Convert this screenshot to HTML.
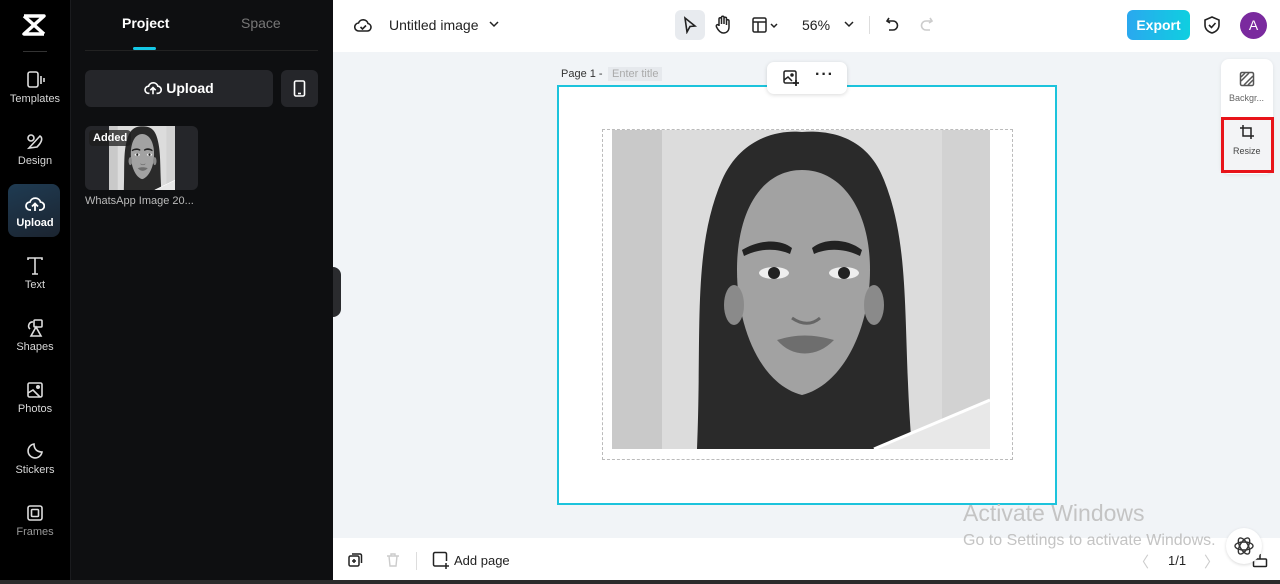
<!DOCTYPE html>
<html><head><meta charset="utf-8"><style>
*{box-sizing:border-box;margin:0;padding:0}
body{width:1280px;height:584px;overflow:hidden;font-family:"Liberation Sans",sans-serif;background:#f1f4f7;position:relative}
.abs{position:absolute}
.rail{left:0;top:0;width:70px;height:580px;background:#000}
.panel{left:70px;top:0;width:263px;height:580px;background:#0e0f11;border-left:1px solid #1a1b1e}
.ri{position:absolute;left:0;width:70px;text-align:center;color:#d8d8d8;font-size:11px}
.ri svg{display:block;margin:0 auto 3px}
.top{left:333px;top:0;width:947px;height:52px;background:#fff}
.bot{left:333px;top:538px;width:947px;height:42px;background:#fff}
.tb{color:#222;font-size:14px}
</style></head><body>
<svg width="0" height="0" style="position:absolute"><defs>
<symbol id="por" viewBox="0 0 378 319" preserveAspectRatio="none">
<rect width="378" height="319" fill="#c9c9c9"/>
<rect x="50" y="0" width="280" height="319" fill="#dcdcdc"/>
<rect x="330" y="0" width="48" height="319" fill="#d2d2d2"/>
<path d="M85 319 C90 200 80 120 110 50 C130 5 170 0 190 2 C215 0 255 5 272 50 C300 120 290 200 300 319 Z" fill="#2a2a2a"/>
<path d="M190 40 C150 40 125 80 125 140 C125 200 150 255 190 265 C230 255 258 200 258 140 C258 80 230 40 190 40 Z" fill="#a2a2a2"/>
<ellipse cx="122" cy="175" rx="10" ry="20" fill="#8a8a8a"/>
<ellipse cx="262" cy="175" rx="10" ry="20" fill="#8a8a8a"/>
<path d="M130 120 C150 108 170 110 180 118 L178 124 C165 118 148 118 132 126 Z" fill="#222"/>
<path d="M200 118 C212 108 235 108 250 120 L248 126 C232 118 215 118 202 124 Z" fill="#222"/>
<ellipse cx="162" cy="143" rx="15" ry="6" fill="#eee"/><circle cx="162" cy="143" r="6" fill="#222"/>
<ellipse cx="232" cy="143" rx="15" ry="6" fill="#eee"/><circle cx="232" cy="143" r="6" fill="#222"/>
<path d="M180 188 C190 195 200 195 208 188" stroke="#666" stroke-width="3" fill="none"/>
<path d="M165 210 C185 204 200 204 222 210 C205 228 180 228 165 210 Z" fill="#6e6e6e"/>
<path d="M262 319 L378 270 L378 319 Z" fill="#e8e8e8"/>
<path d="M262 319 L378 270" stroke="#fff" stroke-width="3"/>
</symbol></defs></svg>

<div class="abs rail"></div>
<div class="abs panel"></div>
<!-- logo -->
<svg class="abs" style="left:21px;top:13px" width="26" height="24" viewBox="0 0 26 24"><path d="M3 3 L23 3 L3 21 L23 21" stroke="#fff" stroke-width="3.5" fill="none" stroke-linejoin="round"/><path d="M3 3 L23 21" stroke="#fff" stroke-width="3.5"/></svg>
<div class="abs" style="left:23px;top:51px;width:24px;height:1px;background:#333"></div>
<div class="ri" style="top:70px"><svg width="20" height="20" viewBox="0 0 20 20" fill="none" stroke="#ddd" stroke-width="1.6"><rect x="3" y="2" width="10" height="15" rx="2"/><path d="M16 6v8M19 8v4"/></svg>Templates</div>
<div class="ri" style="top:132px"><svg width="20" height="20" viewBox="0 0 20 20" fill="none" stroke="#ddd" stroke-width="1.6"><circle cx="6" cy="6" r="3"/><path d="M4 16 L15 4 C18 6 17 10 12 15 Z"/></svg>Design</div>
<div class="abs" style="left:8px;top:184px;width:52px;height:53px;border-radius:8px;background:linear-gradient(160deg,#1f3b52,#1b2430)"></div>
<div class="ri" style="top:194px;color:#fff;font-weight:bold"><svg width="20" height="20" viewBox="0 0 20 20" fill="none" stroke="#fff" stroke-width="1.8"><path d="M6 16 H5 A4 4 0 0 1 5 8 A5.5 5.5 0 0 1 15.5 8 A4 4 0 0 1 15 16 H14"/><path d="M10 17 V10 M7 12.5 L10 9.5 L13 12.5"/></svg>Upload</div>
<div class="ri" style="top:256px"><svg width="20" height="20" viewBox="0 0 20 20" fill="none" stroke="#ddd" stroke-width="1.6"><path d="M3 4 V2 H17 V4 M10 2 V18 M7 18 H13"/></svg>Text</div>
<div class="ri" style="top:318px"><svg width="20" height="20" viewBox="0 0 20 20" fill="none" stroke="#ddd" stroke-width="1.6"><path d="M8 4 A4 4 0 0 0 5 11"/><rect x="9" y="2" width="8" height="7" rx="1"/><path d="M11 9 L6 18 H16 Z"/></svg>Shapes</div>
<div class="ri" style="top:380px"><svg width="20" height="20" viewBox="0 0 20 20" fill="none" stroke="#ddd" stroke-width="1.6"><rect x="3" y="3" width="14" height="14" rx="1.5"/><path d="M3 13 L8 10 L15 17"/><circle cx="13" cy="7" r="1.2" fill="#ddd"/></svg>Photos</div>
<div class="ri" style="top:441px"><svg width="20" height="20" viewBox="0 0 20 20" fill="none" stroke="#ddd" stroke-width="1.6"><path d="M17 11 A7 7 0 1 1 9 3 C9 8 12 11 17 11 Z"/></svg>Stickers</div>
<div class="ri" style="top:503px;color:#999"><svg width="20" height="20" viewBox="0 0 20 20" fill="none" stroke="#ddd" stroke-width="1.6"><rect x="3" y="3" width="14" height="14" rx="2"/><rect x="6.5" y="6.5" width="7" height="7" rx="1"/></svg>Frames</div>

<!-- panel content -->
<div class="abs" style="left:122px;top:15px;color:#fff;font-weight:bold;font-size:14px">Project</div>
<div class="abs" style="left:241px;top:15px;color:#777;font-size:14px">Space</div>
<div class="abs" style="left:133px;top:47px;width:23px;height:3px;background:#14c8e6;border-radius:2px"></div>
<div class="abs" style="left:85px;top:50px;width:233px;height:1px;background:#222"></div>
<div class="abs" style="left:85px;top:70px;width:188px;height:37px;background:#25262a;border-radius:6px;color:#fff;font-weight:bold;font-size:14px;line-height:37px;text-align:center"><svg width="18" height="16" viewBox="0 0 20 18" style="vertical-align:-3px;margin-right:4px" fill="none" stroke="#fff" stroke-width="1.8"><path d="M6 15 H5 A4 4 0 0 1 5 7 A5.5 5.5 0 0 1 15.5 7 A4 4 0 0 1 15 15 H14"/><path d="M10 16 V9 M7 11.5 L10 8.5 L13 11.5"/></svg>Upload</div>
<div class="abs" style="left:281px;top:70px;width:37px;height:37px;background:#25262a;border-radius:6px"><svg width="37" height="37" viewBox="0 0 37 37" fill="none" stroke="#fff" stroke-width="1.6"><rect x="13.5" y="11" width="10" height="15" rx="1.5"/><path d="M17 23.5 H20"/></svg></div>
<div class="abs" style="left:85px;top:126px;width:113px;height:64px;background:#25262a;border-radius:6px;overflow:hidden"><svg class="abs" style="left:24px;top:0" width="66" height="64"><use href="#por" width="66" height="64"/></svg><div class="abs" style="left:4px;top:4px;background:rgba(30,30,30,.75);color:#fff;font-weight:bold;font-size:11px;padding:2px 4px;border-radius:4px">Added</div></div>
<div class="abs" style="left:85px;top:195px;color:#bbb;font-size:11px">WhatsApp Image 20...</div>
<div class="abs" style="left:333px;top:267px;width:8px;height:50px;background:#2a2b2e;border-radius:0 8px 8px 0"></div>

<!-- top bar -->
<div class="abs top"></div>
<svg class="abs" style="left:354px;top:16px" width="18" height="18" viewBox="0 0 18 18" fill="none" stroke="#222" stroke-width="1.6"><path d="M5 15 A4 4 0 0 1 4.5 7 A5 5 0 0 1 14 7.5 A3.8 3.8 0 0 1 13.5 15 Z"/><path d="M6.5 11 L8.5 13 L12 9.5"/></svg>
<div class="abs tb" style="left:389px;top:17px">Untitled image</div>
<svg class="abs" style="left:489px;top:20px" width="10" height="8" viewBox="0 0 10 8" fill="none" stroke="#222" stroke-width="1.5"><path d="M1 2 L5 6 L9 2"/></svg>
<div class="abs" style="left:675px;top:10px;width:30px;height:30px;background:#e8ebef;border-radius:6px"></div>
<svg class="abs" style="left:682px;top:16px" width="16" height="18" viewBox="0 0 16 18" fill="none" stroke="#222" stroke-width="1.6"><path d="M3 2 L13 10 L8 10.5 L5 16 Z"/></svg>
<svg class="abs" style="left:714px;top:15px" width="18" height="20" viewBox="0 0 18 20" fill="none" stroke="#222" stroke-width="1.5"><path d="M5 11 V4 A1.2 1.2 0 0 1 7.5 4 V9 V2.5 A1.2 1.2 0 0 1 10 2.5 V9 V3.5 A1.2 1.2 0 0 1 12.5 3.5 V10 V6 A1.2 1.2 0 0 1 15 6 V12 C15 16 12.5 18 9.5 18 C6 18 4 15 2.5 12 L2.3 11 A1.3 1.3 0 0 1 5 11"/></svg>
<svg class="abs" style="left:751px;top:17px" width="32" height="16" viewBox="0 0 32 16" fill="none" stroke="#222" stroke-width="1.5"><rect x="2" y="1" width="13" height="14" rx="1.5"/><path d="M2 5 H15 M7 5 V15"/><path d="M20 7 L23 10 L26 7"/></svg>
<div class="abs tb" style="left:802px;top:17px">56%</div>
<svg class="abs" style="left:844px;top:20px" width="10" height="8" viewBox="0 0 10 8" fill="none" stroke="#222" stroke-width="1.5"><path d="M1 2 L5 6 L9 2"/></svg>
<div class="abs" style="left:869px;top:16px;width:1px;height:18px;background:#ddd"></div>
<svg class="abs" style="left:885px;top:16px" width="16" height="18" viewBox="0 0 16 18" fill="none" stroke="#222" stroke-width="1.6"><path d="M4 2 L2 5 L5 7"/><path d="M2.5 5 H8 A4.5 4.5 0 0 1 8 14 H4"/></svg>
<svg class="abs" style="left:918px;top:16px" width="16" height="18" viewBox="0 0 16 18" fill="none" stroke="#ccc" stroke-width="1.6"><path d="M12 2 L14 5 L11 7"/><path d="M13.5 5 H8 A4.5 4.5 0 0 0 8 14 H12"/></svg>
<div class="abs" style="left:1127px;top:10px;width:63px;height:30px;border-radius:6px;background:linear-gradient(90deg,#2aa8ef,#0fcfe0);color:#fff;font-weight:bold;font-size:14px;line-height:30px;text-align:center">Export</div>
<svg class="abs" style="left:1203px;top:15px" width="18" height="20" viewBox="0 0 18 20" fill="none" stroke="#222" stroke-width="1.6"><path d="M9 2 L16 5 V10 C16 14 13 17 9 18 C5 17 2 14 2 10 V5 Z"/><path d="M6 10 L8.5 12.5 L12.5 8"/></svg>
<div class="abs" style="left:1240px;top:12px;width:27px;height:27px;border-radius:50%;background:#7a2a9e;color:#fff;font-size:14px;line-height:27px;text-align:center">A</div>

<!-- canvas -->
<div class="abs" style="left:561px;top:68px;font-size:11px;color:#333">Page 1 -</div>
<div class="abs" style="left:608px;top:67px;font-size:11px;color:#aaa;background:#e6e9ed;padding:1px 4px">Enter title</div>
<div class="abs" style="left:557px;top:85px;width:500px;height:420px;background:#fff;border:2px solid #1cc3dc"></div>
<div class="abs" style="left:767px;top:62px;width:80px;height:32px;background:#fff;border-radius:7px;box-shadow:0 1px 4px rgba(0,0,0,.15)"></div>
<svg class="abs" style="left:782px;top:69px" width="18" height="18" viewBox="0 0 18 18" fill="none" stroke="#222" stroke-width="1.5"><rect x="2" y="2" width="12" height="12" rx="1.5"/><path d="M2 11 L6 8 L10 12"/><circle cx="10" cy="6" r="1" fill="#222"/><path d="M14 11 V17 M11 14 H17" stroke-width="1.8"/></svg>
<div class="abs" style="left:815px;top:66px;font-size:16px;font-weight:bold;color:#222;letter-spacing:1px">···</div>
<div class="abs" style="left:602px;top:129px;width:411px;height:331px;border:1px dashed #bbb"></div>
<svg class="abs" style="left:612px;top:130px" width="378" height="319"><use href="#por" width="378" height="319"/></svg>

<!-- right panel -->
<div class="abs" style="left:1221px;top:59px;width:52px;height:115px;background:#fff;border-radius:8px;box-shadow:0 1px 4px rgba(0,0,0,.08)"></div>
<svg class="abs" style="left:1239px;top:71px" width="16" height="16" viewBox="0 0 16 16" fill="none" stroke="#555" stroke-width="1.5"><rect x="1.5" y="1.5" width="13" height="13" rx="1.5"/><path d="M2 10 L10 2 M5 14 L14 5 M2 6 L6 2 M9 14 L14 9"/></svg>
<div class="abs" style="left:1229px;top:93px;font-size:9px;color:#666">Backgr...</div>
<div class="abs" style="left:1221px;top:117px;width:53px;height:56px;border:3px solid #e8141a;background:#f3f4f6"></div>
<svg class="abs" style="left:1239px;top:124px" width="16" height="16" viewBox="0 0 16 16" fill="none" stroke="#222" stroke-width="1.5"><path d="M4 1 V12 H15 M1 4 H12 V15"/></svg>
<div class="abs" style="left:1233px;top:146px;font-size:9px;color:#444">Resize</div>

<!-- watermark -->
<div class="abs" style="left:963px;top:500px;font-size:23px;color:#c4c4c4">Activate Windows</div>
<div class="abs" style="left:963px;top:532px;font-size:16px;color:#c4c4c4">Go to Settings to activate Windows.</div>

<!-- bottom -->
<div class="abs bot"></div>
<div class="abs" style="left:963px;top:532px;font-size:16px;color:#c4c4c4">Go to Settings to activate Windows.</div>
<svg class="abs" style="left:347px;top:552px" width="16" height="16" viewBox="0 0 16 16" fill="none" stroke="#222" stroke-width="1.5"><rect x="2" y="4" width="10" height="10" rx="1.5"/><path d="M5 2 H13 A1.5 1.5 0 0 1 14.5 3.5 V11"/><path d="M7 7 V11 M5 9 H9"/></svg>
<svg class="abs" style="left:386px;top:552px" width="14" height="16" viewBox="0 0 14 16" fill="none" stroke="#ccc" stroke-width="1.4"><path d="M1 4 H13 M5 4 V2 H9 V4 M3 4 L4 14 H10 L11 4"/></svg>
<div class="abs" style="left:416px;top:552px;width:1px;height:18px;background:#ddd"></div>
<svg class="abs" style="left:432px;top:551px" width="18" height="18" viewBox="0 0 18 18" fill="none" stroke="#222" stroke-width="1.5"><path d="M11 15 H3 A1.5 1.5 0 0 1 1.5 13.5 V3 A1.5 1.5 0 0 1 3 1.5 H13 A1.5 1.5 0 0 1 14.5 3 V10"/><path d="M14 12 V18 M11 15 H17"/></svg>
<div class="abs tb" style="left:454px;top:553px;font-size:13px">Add page</div>
<div class="abs" style="left:1134px;top:551px;font-size:15px;color:#ccc">〈</div>
<div class="abs" style="left:1168px;top:553px;font-size:13px;color:#222">1/1</div>
<div class="abs" style="left:1204px;top:551px;font-size:15px;color:#ccc">〉</div>
<svg class="abs" style="left:1252px;top:552px" width="16" height="16" viewBox="0 0 16 16" fill="none" stroke="#222" stroke-width="1.5"><rect x="1.5" y="7" width="13" height="7.5" rx="1"/><path d="M8 2 V7"/></svg>
<div class="abs" style="left:1226px;top:528px;width:36px;height:36px;border-radius:50%;background:#fff;box-shadow:0 1px 3px rgba(0,0,0,.15)"></div>
<svg class="abs" style="left:1232px;top:534px" width="24" height="24" viewBox="0 0 24 24" fill="none" stroke="#333" stroke-width="1.4"><ellipse cx="12" cy="12" rx="9" ry="4"/><ellipse cx="12" cy="12" rx="9" ry="4" transform="rotate(60 12 12)"/><ellipse cx="12" cy="12" rx="9" ry="4" transform="rotate(120 12 12)"/></svg>
<div class="abs" style="left:0;top:580px;width:1280px;height:4px;background:#2b2b2b"></div>
</body></html>
